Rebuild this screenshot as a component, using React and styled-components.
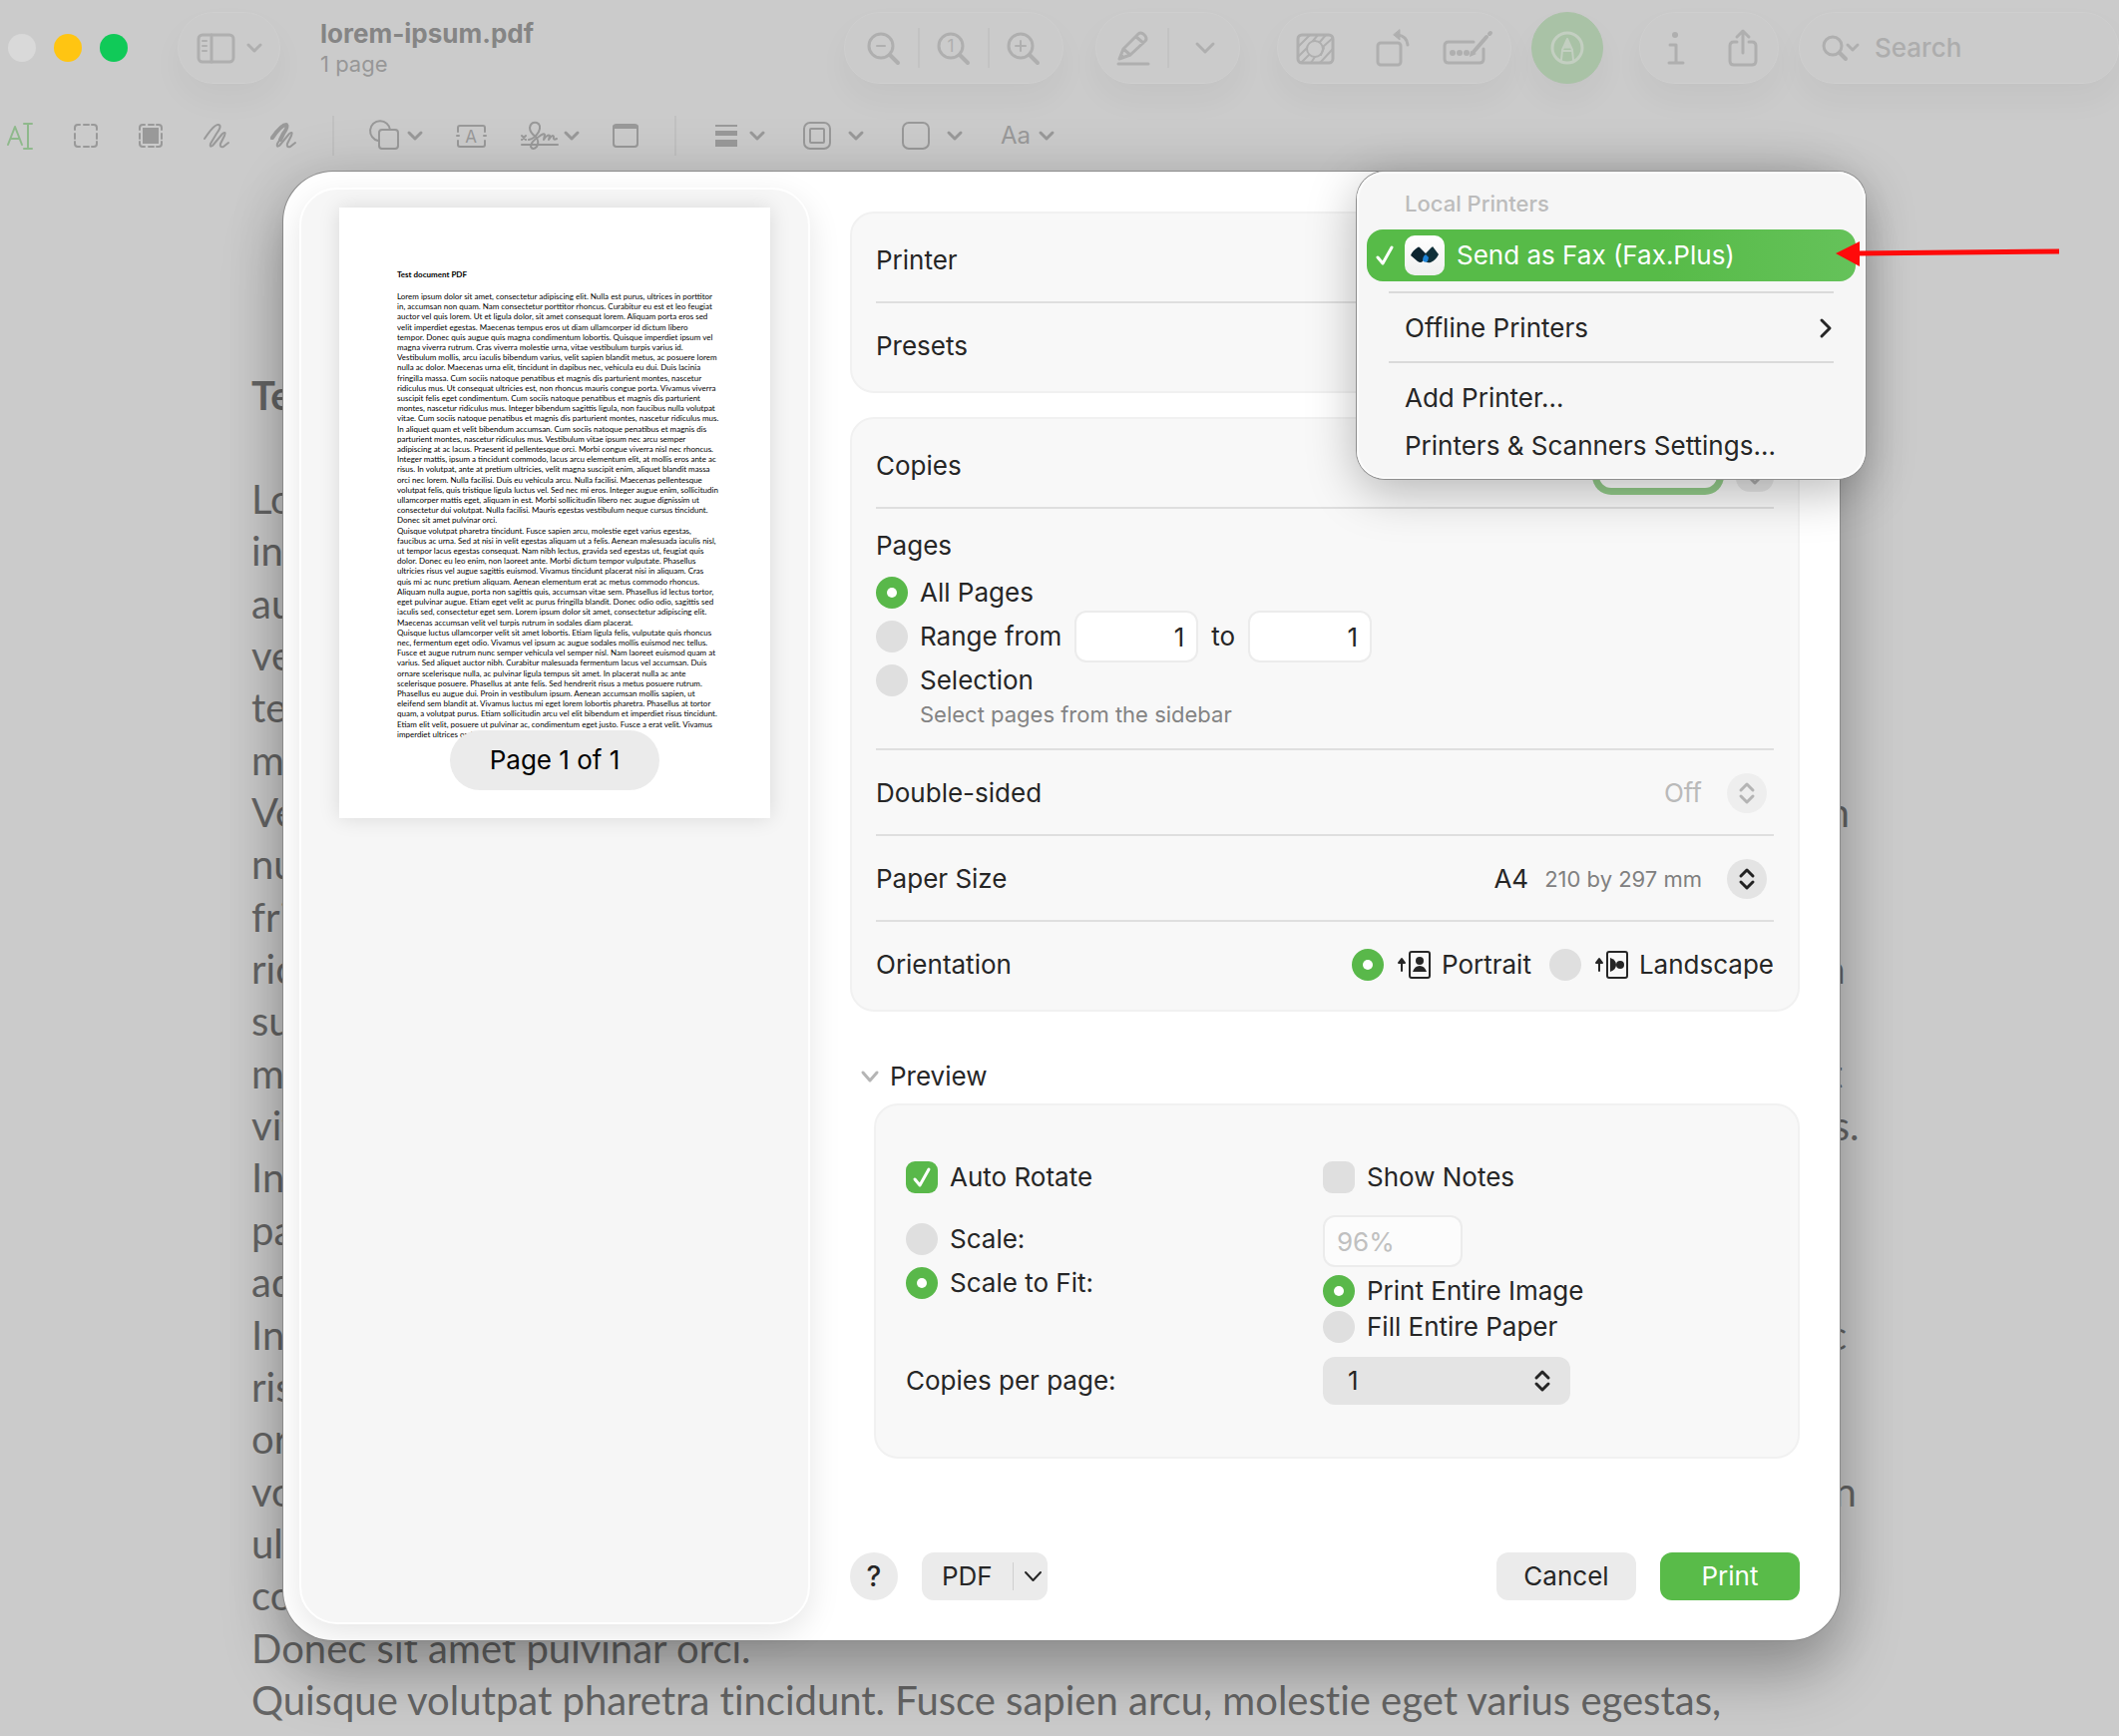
import React, { useState } from 'react';
import styled, { createGlobalStyle } from 'styled-components';

const GlobalStyle = createGlobalStyle`
  * {
    box-sizing: border-box;
  }

  body {
    margin: 0;
    background: #cbcbcb;
    color: #262626;
    font-family: Inter, 'Liberation Sans', sans-serif;
    font-size: 26px;
    line-height: 32px;
  }

  button,
  input,
  select {
    margin: 0;
    padding: 0;
    border: none;
    background: none;
    color: inherit;
    font: inherit;
  }
`;

const paragraphs = [
  [
    'Lorem ipsum dolor sit amet, consectetur adipiscing elit. Nulla est purus, ultrices in porttitor',
    'in, accumsan non quam. Nam consectetur porttitor rhoncus. Curabitur eu est et leo feugiat',
    'auctor vel quis lorem. Ut et ligula dolor, sit amet consequat lorem. Aliquam porta eros sed',
    'velit imperdiet egestas. Maecenas tempus eros ut diam ullamcorper id dictum libero',
    'tempor. Donec quis augue quis magna condimentum lobortis. Quisque imperdiet ipsum vel',
    'magna viverra rutrum. Cras viverra molestie urna, vitae vestibulum turpis varius id.',
    'Vestibulum mollis, arcu iaculis bibendum varius, velit sapien blandit metus, ac posuere lorem',
    'nulla ac dolor. Maecenas urna elit, tincidunt in dapibus nec, vehicula eu dui. Duis lacinia',
    'fringilla massa. Cum sociis natoque penatibus et magnis dis parturient montes, nascetur',
    'ridiculus mus. Ut consequat ultricies est, non rhoncus mauris congue porta. Vivamus viverra',
    'suscipit felis eget condimentum. Cum sociis natoque penatibus et magnis dis parturient',
    'montes, nascetur ridiculus mus. Integer bibendum sagittis ligula, non faucibus nulla volutpat',
    'vitae. Cum sociis natoque penatibus et magnis dis parturient montes, nascetur ridiculus mus.',
    'In aliquet quam et velit bibendum accumsan. Cum sociis natoque penatibus et magnis dis',
    'parturient montes, nascetur ridiculus mus. Vestibulum vitae ipsum nec arcu semper',
    'adipiscing at ac lacus. Praesent id pellentesque orci. Morbi congue viverra nisl nec rhoncus.',
    'Integer mattis, ipsum a tincidunt commodo, lacus arcu elementum elit, at mollis eros ante ac',
    'risus. In volutpat, ante at pretium ultricies, velit magna suscipit enim, aliquet blandit massa',
    'orci nec lorem. Nulla facilisi. Duis eu vehicula arcu. Nulla facilisi. Maecenas pellentesque',
    'volutpat felis, quis tristique ligula luctus vel. Sed nec mi eros. Integer augue enim, sollicitudin',
    'ullamcorper mattis eget, aliquam in est. Morbi sollicitudin libero nec augue dignissim ut',
    'consectetur dui volutpat. Nulla facilisi. Mauris egestas vestibulum neque cursus tincidunt.',
    'Donec sit amet pulvinar orci.',
  ],
  [
    'Quisque volutpat pharetra tincidunt. Fusce sapien arcu, molestie eget varius egestas,',
    'faucibus ac urna. Sed at nisi in velit egestas aliquam ut a felis. Aenean malesuada iaculis nisl,',
    'ut tempor lacus egestas consequat. Nam nibh lectus, gravida sed egestas ut, feugiat quis',
    'dolor. Donec eu leo enim, non laoreet ante. Morbi dictum tempor vulputate. Phasellus',
    'ultricies risus vel augue sagittis euismod. Vivamus tincidunt placerat nisi in aliquam. Cras',
    'quis mi ac nunc pretium aliquam. Aenean elementum erat ac metus commodo rhoncus.',
    'Aliquam nulla augue, porta non sagittis quis, accumsan vitae sem. Phasellus id lectus tortor,',
    'eget pulvinar augue. Etiam eget velit ac purus fringilla blandit. Donec odio odio, sagittis sed',
    'iaculis sed, consectetur eget sem. Lorem ipsum dolor sit amet, consectetur adipiscing elit.',
    'Maecenas accumsan velit vel turpis rutrum in sodales diam placerat.',
  ],
  [
    'Quisque luctus ullamcorper velit sit amet lobortis. Etiam ligula felis, vulputate quis rhoncus',
    'nec, fermentum eget odio. Vivamus vel ipsum ac augue sodales mollis euismod nec tellus.',
    'Fusce et augue rutrum nunc semper vehicula vel semper nisl. Nam laoreet euismod quam at',
    'varius. Sed aliquet auctor nibh. Curabitur malesuada fermentum lacus vel accumsan. Duis',
    'ornare scelerisque nulla, ac pulvinar ligula tempus sit amet. In placerat nulla ac ante',
    'scelerisque posuere. Phasellus at ante felis. Sed hendrerit risus a metus posuere rutrum.',
    'Phasellus eu augue dui. Proin in vestibulum ipsum. Aenean accumsan mollis sapien, ut',
    'eleifend sem blandit at. Vivamus luctus mi eget lorem lobortis pharetra. Phasellus at tortor',
    'quam, a volutpat purus. Etiam sollicitudin arcu vel elit bibendum et imperdiet risus tincidunt.',
    'Etiam elit velit, posuere ut pulvinar ac, condimentum eget justo. Fusce a erat velit. Vivamus',
    'imperdiet ultrices orci',
  ],
];

const allLines = paragraphs.flat();

/* ---------- icons ---------- */

const Icon = styled.svg`
  display: block;
  flex: none;
  fill: none;
  stroke: currentColor;
  stroke-width: ${(p) => p.$stroke || 3};
  stroke-linecap: round;
  stroke-linejoin: round;
  overflow: visible;
`;

const IconText = styled.text`
  fill: currentColor;
  stroke: none;
  font-family: Inter, sans-serif;
  text-anchor: middle;
`;

const Chevron = ({ width = 14, height = 8, stroke = 3 }) => (
  <Icon width={width} height={height} $stroke={stroke} aria-hidden="true">
    <path d={`M1 1L${width / 2} ${height - 1}L${width - 1} 1`} />
  </Icon>
);

const UpDown = () => (
  <Icon width="14" height="22" $stroke={3} aria-hidden="true">
    <path d="M1 8L7 2L13 8M1 14L7 20L13 14" />
  </Icon>
);

const SidebarIcon = () => (
  <Icon width="39" height="31">
    <rect x="2" y="2" width="35" height="27" rx="4" />
    <path d="M15 2V29" />
    <path d="M6 8H10M6 13H10M6 18H10" strokeWidth="2" />
  </Icon>
);

const Magnifier = ({ children }) => (
  <Icon width="32" height="33">
    <circle cx="13" cy="14" r="12" />
    <path d="M22 23L30 31" strokeWidth="4" />
    {children}
  </Icon>
);

const HighlightIcon = () => (
  <Icon width="34" height="35">
    <path d="M3 28L7 18L22 3Q24 1 27 3L29 5Q31 8 29 10L14 24ZM7 18L14 24M20 6L27 12" />
    <path d="M3 28L5 23L8 26Z" fill="currentColor" strokeWidth="1" />
    <path d="M2 33H32" />
  </Icon>
);

const AdjustIcon = () => (
  <Icon width="39" height="31">
    <rect x="2" y="2" width="35" height="28" rx="4" />
    <circle cx="19" cy="16" r="8" strokeWidth="2" />
    <path
      d="M2 14L14 2M2 24L11 15M6 29L13 22M22 2L17 8M30 2L24 9M37 5L27 14M37 16L24 30M15 30L19 24M28 15L25 22"
      strokeWidth="2"
    />
  </Icon>
);

const RotateIcon = () => (
  <Icon width="34" height="37" viewBox="-4 0 34 37">
    <rect x="2" y="13" width="23" height="22" rx="3" />
    <path d="M22 5Q31 6 32 15" />
    <path d="M24 0V10L18 5Z" fill="currentColor" strokeWidth="1" />
  </Icon>
);

const FormIcon = () => (
  <Icon width="50" height="33">
    <path d="M31 10H6Q2 10 2 14V27Q2 31 6 31H37Q41 31 41 27V17" />
    <path d="M31 20L44 5" strokeWidth="4" />
    <path d="M47 2L48 1" strokeWidth="4" />
    <g fill="currentColor" stroke="none">
      <circle cx="10" cy="21" r="3" />
      <circle cx="17" cy="21" r="3" />
      <circle cx="24" cy="21" r="3" />
      <path d="M27 25L28 19L34 22Z" />
    </g>
  </Icon>
);

const MarkupIcon = () => (
  <Icon width="34" height="34" color="#c3cfc1">
    <circle cx="17" cy="17" r="15" />
    <path d="M11 29L12 19L17 8L22 19L23 29M12 20H22" strokeWidth="2" />
    <path d="M17 8L20 17H14Z" fill="currentColor" strokeWidth="1" />
  </Icon>
);

const InfoIcon = () => (
  <Icon width="18" height="33">
    <circle cx="8" cy="3" r="3" fill="currentColor" stroke="none" />
    <path d="M3 13H9V31M2 31H16" />
  </Icon>
);

const ShareIcon = () => (
  <Icon width="30" height="38">
    <path d="M9 13H6Q2 13 2 17V32Q2 36 6 36H24Q28 36 28 32V17Q28 13 24 13H21" />
    <path d="M15 24V3M9 8L15 2L21 8" />
  </Icon>
);

const SearchIcon = () => (
  <Icon width="37" height="26">
    <circle cx="11" cy="11" r="9" />
    <path d="M18 18L24 24" strokeWidth="4" />
    <path d="M26 10L31 15L36 10" />
  </Icon>
);

const TextSelectIcon = () => (
  <Icon width="26" height="27" $stroke={2}>
    <path d="M1 22L8 4L15 22M4 16H12M21 1V26M17 1H25M17 26H25" />
  </Icon>
);

const SelectIcon = ({ filled }) => (
  <Icon width="24" height="24" $stroke={2}>
    <path d="M1 6V4Q1 1 4 1H6M10 1H15M18 1H20Q23 1 23 4V6M23 10V15M23 18V20Q23 23 20 23H18M15 23H10M6 23H4Q1 23 1 20V18M1 15V10" />
    {filled && <rect x="4" y="4" width="16" height="16" fill="currentColor" stroke="none" />}
  </Icon>
);

const SketchIcon = ({ thick }) => (
  <Icon width="26" height="26" $stroke={2}>
    <path d="M1 16Q11 1 15 2Q19 3 13 11L7 21Q6 25 9 23L19 11Q23 8 21 13L17 21Q16 25 20 24L25 20" />
    {thick && <path d="M2 15Q11 2 16 2Q18 4 13 11L10 17" strokeWidth="4" />}
  </Icon>
);

const ShapesIcon = () => (
  <Icon width="29" height="28" $stroke={2}>
    <path d="M8 19A10 10 0 1 1 20 8" />
    <rect x="9" y="8" width="19" height="19" rx="3" />
  </Icon>
);

const TextBoxIcon = () => (
  <Icon width="31" height="25" $stroke={2}>
    <path d="M2 8V4Q2 2 4 2H27Q29 2 29 4V8M2 17V21Q2 23 4 23H27Q29 23 29 21V17M1 12H3M28 12H30" />
    <IconText x="15" y="19" fontSize="17">A</IconText>
  </Icon>
);

const SignIcon = () => (
  <Icon width="38" height="28" $stroke={2}>
    <path d="M1 14L5 18M5 14L1 18M1 23H37" />
    <path d="M8 18Q14 17 18 10Q21 3 16 1Q10 0 9 6Q9 11 15 15Q19 20 16 25Q12 29 10 25Q10 20 18 15Q23 11 24 13L23 18Q27 12 29 14L28 18Q32 12 33 15Q32 19 36 17" />
  </Icon>
);

const NoteIcon = () => (
  <Icon width="26" height="24" $stroke={2}>
    <rect x="1" y="1" width="24" height="22" rx="3" />
    <path d="M2 3H24" strokeWidth="4" />
  </Icon>
);

const LinesIcon = () => (
  <Icon width="26" height="22">
    <g fill="currentColor" stroke="none">
      <rect x="3" y="0" width="22" height="2" />
      <rect x="3" y="6" width="22" height="5" />
      <rect x="3" y="15" width="22" height="7" />
    </g>
  </Icon>
);

const BorderIcon = () => (
  <Icon width="28" height="28" $stroke={2}>
    <rect x="1" y="1" width="26" height="26" rx="6" />
    <rect x="7" y="7" width="14" height="14" rx="1" />
  </Icon>
);

const FillIcon = () => (
  <Icon width="28" height="28" $stroke={2}>
    <rect x="1" y="1" width="26" height="26" rx="6" />
  </Icon>
);

const OrientationIcon = ({ landscape }) => (
  <Icon width="34" height="28" $stroke={2} aria-hidden="true">
    <path d="M6 20V11" />
    <path d="M3 12L6 8L9 12Z" fill="currentColor" strokeWidth="2" />
    <rect x="14" y="1" width="20" height="26" rx="2" />
    <g fill="currentColor" stroke="none">
      {landscape ? (
        <>
          <circle cx="27" cy="14" r="4" />
          <path d="M17 7Q23 9 23 14Q23 19 17 21Z" />
        </>
      ) : (
        <>
          <circle cx="24" cy="10" r="4" />
          <path d="M17 21Q19 15 24 15Q29 15 31 21Z" />
        </>
      )}
    </g>
  </Icon>
);

const FaxLogo = () => (
  <svg width="30" height="18" viewBox="0 0 30 18" aria-hidden="true">
    <path d="M8 1Q9 0 10 1L17 8L13 15Q11 17 8 15L1 9Q3 4 8 1Z" fill="#0c2430" />
    <path d="M23 0L29 8Q26 14 21 16Q18 17 16 15L15 9Z" fill="#10303a" />
    <path d="M15 8L22 1L24 2L19 11Z" fill="#10303a" />
    <path d="M16 8L19 11L18 15Q15 17 13 14Q13 10 16 8Z" fill="#1d84d8" />
  </svg>
);

const CheckIcon = () => (
  <Icon width="16" height="20" $stroke={3} aria-hidden="true">
    <path d="M1 12L6 18L15 2" />
  </Icon>
);

/* ---------- window behind the dialog ---------- */

const Window = styled.div`
  position: relative;
  min-height: 100vh;
  overflow: hidden;
`;

const TitleBar = styled.header`
  display: flex;
  align-items: center;
  height: 96px;
  padding-left: 8px;
  color: #afafaf;
`;

const Lights = styled.div`
  display: flex;
  gap: 18px;
`;

const Light = styled.button`
  width: 28px;
  height: 28px;
  border-radius: 50%;
  background: ${(p) => p.$color};
`;

const Pill = styled.div`
  display: flex;
  align-items: center;
  flex: none;
  gap: ${(p) => p.$gap || 18}px;
  height: 72px;
  margin-left: ${(p) => p.$before}px;
  padding: ${(p) => p.$pad};
  border: 1px solid #cfcfcf;
  border-radius: 36px;
  background: #cbcbcb;
  box-shadow: 0 16px 32px rgba(0, 0, 0, 0.04);
`;

const MarkupPill = styled(Pill)`
  border-color: #a9c2a6;
  background: #a9c2a6;
`;

const SearchPill = styled(Pill)`
  width: 321px;
`;

const Split = styled.span`
  width: 2px;
  height: 40px;
  background: #c3c3c3;
`;

const PlainButton = styled.button`
  display: flex;
  align-items: center;
  gap: ${(p) => p.$gap || 12}px;
`;

const MenuArrowButton = styled(PlainButton)`
  justify-content: center;
  width: 38px;
`;

const Titles = styled.div`
  flex: 1;
  margin-left: 40px;
`;

const FileName = styled.h1`
  margin: 0;
  color: #858585;
  font-size: 26px;
  line-height: 32px;
`;

const PageCount = styled.p`
  margin: 0;
  color: #979797;
  font-size: 22px;
  line-height: 28px;
`;

const SearchInput = styled.input`
  flex: 1;
  min-width: 0;
  font-weight: 500;

  &::placeholder {
    color: #adadad;
    opacity: 1;
  }
`;

const ToolBar = styled.div`
  display: flex;
  align-items: center;
  gap: 36px;
  height: 80px;
  padding-left: 7px;
  color: #999;
`;

const ToolGroup = styled.div`
  display: flex;
  align-items: center;
  gap: ${(p) => p.$gap}px;
`;

const ToolButton = styled(PlainButton)`
  color: ${(p) => (p.$active ? '#8fb98c' : 'inherit')};
`;

const ToolSplit = styled(Split)`
  background: #c1c1c1;
`;

const FontLabel = styled.span`
  font-size: 24px;
`;

const Document = styled.article`
  padding: 194px 0 0 252px;
  color: #656565;
  font-family: Lato, Carlito, sans-serif;
  font-size: 40px;
  font-variant-ligatures: none;
  line-height: 52px;
  white-space: nowrap;
`;

const DocumentTitle = styled.h2`
  margin: 0 0 52px;
  font-size: inherit;
`;

const DocumentLines = styled.div`
  display: flex;
  flex-direction: column;
  justify-content: space-between;
  height: 1256px;
`;

/* ---------- print dialog ---------- */

const Overlay = styled.div`
  position: absolute;
  inset: 0;
  display: flex;
  justify-content: center;
  align-items: flex-start;
  padding: 172px 0 0 4px;
`;

const Dialog = styled.section`
  position: relative;
  display: flex;
  width: 100%;
  max-width: 1560px;
  padding: 16px 40px 16px 16px;
  border-radius: 50px;
  background: #fff;
  box-shadow: 0 0 0 1px #8c8c8c, 0 36px 60px rgba(0, 0, 0, 0.26), 0 0 60px rgba(0, 0, 0, 0.12);
`;

const Sidebar = styled.aside`
  flex: none;
  width: 512px;
  padding: 18px 38px;
  border: 2px solid #fff;
  border-radius: 38px;
  background: #f6f6f6;
  box-shadow: 0 10px 32px rgba(0, 0, 0, 0.1);
`;

const Paper = styled.div`
  position: relative;
  height: 612px;
  padding: 62px 0 0 58px;
  background: #fff;
  box-shadow: 0 0 20px rgba(0, 0, 0, 0.12);
  color: #000;
  font-family: Lato, Carlito, sans-serif;
  font-size: 8px;
  line-height: 10px;
  white-space: nowrap;
`;

const PaperTitle = styled.h2`
  margin: 0 0 12px;
  color: #000;
  font-size: inherit;
`;

const PaperLines = styled.div`
  display: flex;
  flex-direction: column;
  justify-content: space-between;
  height: 449px;
`;

const PageBadge = styled.div`
  position: absolute;
  bottom: 28px;
  left: 50%;
  width: 210px;
  transform: translateX(-50%);
  border-radius: 30px;
  background: #ebebeb;
  color: #000;
  font-family: Inter, sans-serif;
  font-size: 26px;
  line-height: 60px;
  text-align: center;
`;

const Settings = styled.form`
  flex: 1;
  min-width: 0;
  margin-left: 40px;
  padding: 24px 0;
`;

const Group = styled.div`
  margin-bottom: 24px;
  padding: 4px 24px;
  border: 2px solid #f1f1f1;
  border-radius: 24px;
  background: #f8f8f8;
`;

const Row = styled.div`
  display: flex;
  align-items: center;
  justify-content: space-between;
  height: 86px;
  padding-top: 2px;
  border-bottom: 2px solid #dfdfdf;

  &:last-child {
    height: 84px;
    border-bottom: none;
  }
`;

const Pages = styled.fieldset`
  margin: 0;
  padding: 21px 0 18px;
  border: none;
  border-bottom: 2px solid #dfdfdf;
`;

const PagesLegend = styled.legend`
  float: left;
  width: 100%;
  padding: 0;
  margin-bottom: 15px;
`;

const Options = styled.div`
  display: flex;
  flex-direction: column;
  gap: ${(p) => p.$gap || 12}px;
  clear: both;
`;

const Option = styled.label`
  display: flex;
  align-items: center;
  gap: 12px;
  height: 32px;
`;

const RangeRow = styled.div`
  display: flex;
  align-items: center;
  gap: 13px;
  height: 32px;
`;

const Radio = styled.input.attrs({ type: 'radio' })`
  appearance: none;
  display: grid;
  place-items: center;
  flex: none;
  width: 32px;
  height: 32px;
  border-radius: 50%;
  background: #dfdfdf;

  &:checked {
    background: #59b84a;
  }

  &:checked::after {
    content: '';
    width: 10px;
    height: 10px;
    border-radius: 50%;
    background: #fff;
  }
`;

const CheckWrap = styled.span`
  display: grid;
  place-items: center;
  color: #fff;

  > * {
    grid-area: 1 / 1;
  }
`;

const CheckInput = styled.input.attrs({ type: 'checkbox' })`
  appearance: none;
  width: 32px;
  height: 32px;
  border-radius: 9px;
  background: #dfdfdf;

  &:checked {
    background: #59b84a;
  }
`;

const Checkbox = ({ label, ...rest }) => (
  <Option>
    <CheckWrap>
      <CheckInput {...rest} />
      {rest.defaultChecked && <CheckIcon />}
    </CheckWrap>
    {label}
  </Option>
);

const Field = styled.input.attrs({ type: 'text' })`
  width: ${(p) => p.$width || 124}px;
  height: 52px;
  padding: 0 12px;
  border: 2px solid #ececec;
  border-radius: 12px;
  background: #fff;
  text-align: ${(p) => p.$align || 'right'};

  &:disabled {
    background: #fcfcfc;
    color: #c0c0c0;
  }
`;

const Hint = styled.p`
  margin: 2px 0 0 44px;
  color: #838383;
  font-size: 22px;
`;

const CopiesField = styled(Field)`
  width: 118px;
  height: 44px;
  margin-right: 19px;
  border: none;
  box-shadow: 0 0 0 7px #93cb8a;
`;

const Stepper = styled.button`
  display: flex;
  align-items: flex-end;
  justify-content: center;
  width: 38px;
  height: 52px;
  padding-bottom: 8px;
  border-radius: 14px;
  background: #e6e6e6;
  color: #aaa;
`;

const Cluster = styled.div`
  display: flex;
  align-items: center;
`;

const BareSelect = styled.select`
  appearance: none;
  width: 60px;
  height: 40px;
  opacity: 1;
  text-align: right;
  text-align-last: right;

  &:disabled {
    color: #bababa;
  }
`;

const Detail = styled.span`
  margin-left: 16px;
  color: #808080;
  font-size: 22px;
`;

const RoundArrows = styled.span`
  display: grid;
  place-items: center;
  width: 40px;
  height: 40px;
  margin: 0 7px 0 25px;
  border-radius: 50%;
  background: ${(p) => (p.$muted ? '#eee' : '#e4e4e4')};
  color: ${(p) => (p.$muted ? '#b4b4b4' : '#222')};
`;

const OrientationOption = styled(Option)`
  margin-left: 18px;
`;

const Disclosure = styled.button`
  display: flex;
  align-items: center;
  gap: 12px;
  height: 40px;
  margin: 44px 0 8px 12px;
  padding-top: 2px;

  svg {
    color: #b5b5b5;
  }
`;

const PreviewGroup = styled(Group)`
  display: grid;
  grid-template-columns: 418px 1fr;
  row-gap: 14px;
  margin: 0 0 94px 24px;
  padding: 56px 30px 52px;
`;

const ScaleModes = styled(Options)`
  padding-top: 16px;
`;

const ScaleValues = styled(Options)`
  padding-top: 8px;
`;

const CopiesLabel = styled.label`
  align-self: center;
`;

const SelectBox = styled.div`
  display: grid;
  align-items: center;
  width: 248px;
  height: 48px;
  border-radius: 12px;
  background: #e4e4e4;

  > * {
    grid-area: 1 / 1;
  }

  > svg {
    justify-self: end;
    margin-right: 21px;
    pointer-events: none;
  }
`;

const BoxedSelect = styled.select`
  appearance: none;
  height: 48px;
  padding-left: 25px;
`;

const Footer = styled.footer`
  display: flex;
  align-items: center;
  gap: 24px;
`;

const FooterButton = styled.button`
  width: 140px;
  height: 48px;
  border-radius: 12px;
  background: ${(p) => (p.$primary ? '#59bb49' : '#ebebeb')};
  color: ${(p) => (p.$primary ? '#fff' : '#262626')};
`;

const HelpButton = styled(FooterButton)`
  width: 48px;
  border-radius: 50%;
  font-size: 28px;
  font-weight: 500;
`;

const PdfButton = styled(FooterButton)`
  display: flex;
  align-items: center;
  gap: 11px;
  width: 126px;
  margin-right: auto;
  padding-left: 20px;
`;

const PdfSplit = styled.span`
  width: 1px;
  height: 28px;
  margin-left: 9px;
  background: #cfcfcf;
`;

/* ---------- printer menu ---------- */

const Menu = styled.div`
  position: absolute;
  top: 0;
  right: -26px;
  width: 510px;
  padding: 8px 10px 10px;
  border-radius: 28px;
  background: #f6f6f6;
  box-shadow: inset 0 0 0 2px #fcfcfc, 0 0 0 1px #8f8f8f, 0 12px 50px rgba(0, 0, 0, 0.28);
`;

const MenuLabel = styled.div`
  margin-bottom: 2px;
  padding-left: 38px;
  color: #bcbcbc;
  font-size: 22px;
  font-weight: 500;
  line-height: 48px;
`;

const MenuItem = styled.button`
  display: flex;
  align-items: center;
  width: 100%;
  height: 48px;
  padding: 2px 24px 0 38px;
  text-align: left;
`;

const MenuItemText = styled.span`
  flex: 1;
`;

const ActiveItem = styled(MenuItem)`
  height: 52px;
  padding: 0 24px 0 10px;
  border-radius: 16px;
  background: linear-gradient(90deg, #57bb48 60%, #65c25a);
  color: #fff;
`;

const LogoTile = styled.span`
  display: grid;
  place-items: center;
  width: 40px;
  height: 40px;
  margin: 0 12px;
  border-radius: 10px;
  background: linear-gradient(#fff, #f0f0f0);
`;

const MenuLine = styled.hr`
  height: 2px;
  margin: 10px 22px;
  border: none;
  background: #dadada;
`;

const Arrow = styled.svg`
  position: absolute;
  top: 68px;
  left: 1556px;
`;

const PrinterMenu = () => (
  <Menu>
    <MenuLabel>Local Printers</MenuLabel>
    <ActiveItem type="button">
      <CheckIcon />
      <LogoTile>
        <FaxLogo />
      </LogoTile>
      <MenuItemText>Send as Fax (Fax.Plus)</MenuItemText>
    </ActiveItem>
    <MenuLine />
    <MenuItem type="button">
      <MenuItemText>Offline Printers</MenuItemText>
      <Icon width="12" height="18">
        <path d="M2 1L10 9L2 17" />
      </Icon>
    </MenuItem>
    <MenuLine />
    <MenuItem type="button">Add Printer…</MenuItem>
    <MenuItem type="button">Printers &amp; Scanners Settings…</MenuItem>
  </Menu>
);

const WindowToolbars = () => (
  <>
    <TitleBar>
      <Lights>
        <Light aria-label="Close" $color="#d9d9d9" />
        <Light aria-label="Minimize" $color="#ffc512" />
        <Light aria-label="Zoom" $color="#10ca58" />
      </Lights>
      <Pill $before={50} $pad="0 18px">
        <PlainButton aria-label="Sidebar">
          <SidebarIcon />
          <Chevron />
        </PlainButton>
      </Pill>
      <Titles>
        <FileName>lorem-ipsum.pdf</FileName>
        <PageCount>1 page</PageCount>
      </Titles>
      <Pill $before={0} $pad="0 23px">
        <PlainButton aria-label="Zoom Out">
          <Magnifier>
            <path d="M9 14H17" strokeWidth="2" />
          </Magnifier>
        </PlainButton>
        <Split />
        <PlainButton aria-label="Actual Size">
          <Magnifier>
            <IconText x="13" y="20" fontSize="17">1</IconText>
          </Magnifier>
        </PlainButton>
        <Split />
        <PlainButton aria-label="Zoom In">
          <Magnifier>
            <path d="M8 14H18M13 9V19" strokeWidth="2" />
          </Magnifier>
        </PlainButton>
      </Pill>
      <Pill $before={32} $gap={17} $pad="0 15px 0 20px">
        <PlainButton aria-label="Highlight">
          <HighlightIcon />
        </PlainButton>
        <Split />
        <MenuArrowButton aria-label="Highlight colors">
          <Chevron width={18} height={10} />
        </MenuArrowButton>
      </Pill>
      <Pill $before={37} $gap={37} $pad="0 18px">
        <PlainButton aria-label="Adjust">
          <AdjustIcon />
        </PlainButton>
        <PlainButton aria-label="Rotate">
          <RotateIcon />
        </PlainButton>
        <PlainButton aria-label="Fill form">
          <FormIcon />
        </PlainButton>
      </Pill>
      <MarkupPill as="button" aria-label="Markup" $before={20} $pad="0 18px">
        <MarkupIcon />
      </MarkupPill>
      <Pill $before={36} $gap={43} $pad="0 20px 0 27px">
        <PlainButton aria-label="Info">
          <InfoIcon />
        </PlainButton>
        <PlainButton aria-label="Share">
          <ShareIcon />
        </PlainButton>
      </Pill>
      <SearchPill as="label" $before={20} $gap={16} $pad="0 20px 0 22px">
        <SearchIcon />
        <SearchInput type="search" placeholder="Search" aria-label="Search" />
      </SearchPill>
    </TitleBar>
    <ToolBar>
      <ToolGroup $gap={41}>
        <ToolButton $active aria-label="Text Selection">
          <TextSelectIcon />
        </ToolButton>
        <ToolButton aria-label="Rectangular Selection">
          <SelectIcon />
        </ToolButton>
        <ToolButton aria-label="Redact">
          <SelectIcon filled />
        </ToolButton>
        <ToolButton aria-label="Sketch">
          <SketchIcon />
        </ToolButton>
        <ToolButton aria-label="Draw">
          <SketchIcon thick />
        </ToolButton>
      </ToolGroup>
      <ToolSplit />
      <ToolGroup $gap={34}>
        <ToolButton aria-label="Shapes" $gap={9}>
          <ShapesIcon />
          <Chevron />
        </ToolButton>
        <ToolButton aria-label="Text">
          <TextBoxIcon />
        </ToolButton>
        <ToolButton aria-label="Sign" $gap={6}>
          <SignIcon />
          <Chevron />
        </ToolButton>
        <ToolButton aria-label="Note">
          <NoteIcon />
        </ToolButton>
      </ToolGroup>
      <ToolSplit />
      <ToolGroup $gap={39}>
        <ToolButton aria-label="Shape Style">
          <LinesIcon />
          <Chevron />
        </ToolButton>
        <ToolButton aria-label="Border Color" $gap={18}>
          <BorderIcon />
          <Chevron />
        </ToolButton>
        <ToolButton aria-label="Fill Color" $gap={18}>
          <FillIcon />
          <Chevron />
        </ToolButton>
        <ToolButton aria-label="Text Style" $gap={9}>
          <FontLabel>Aa</FontLabel>
          <Chevron />
        </ToolButton>
      </ToolGroup>
    </ToolBar>
  </>
);

const PageThumbnail = () => (
  <Sidebar>
    <Paper>
      <PaperTitle>Test document PDF</PaperTitle>
      <PaperLines>
        {allLines.map((line) => (
          <span key={line}>{line}</span>
        ))}
      </PaperLines>
      <PageBadge>Page 1 of 1</PageBadge>
    </Paper>
  </Sidebar>
);

const PrintSettings = () => {
  const [from, setFrom] = useState('1');
  const [to, setTo] = useState('1');

  return (
    <Settings onSubmit={(e) => e.preventDefault()}>
      <Group>
        <Row>Printer</Row>
        <Row>Presets</Row>
      </Group>

      <Group>
        <Row>
          <label htmlFor="copies">Copies</label>
          <Cluster>
            <CopiesField id="copies" defaultValue="1" />
            <Stepper type="button" aria-label="Change copies">
              <Chevron />
            </Stepper>
          </Cluster>
        </Row>
        <Pages>
          <PagesLegend>Pages</PagesLegend>
          <Options>
            <Option>
              <Radio name="pages" defaultChecked />
              All Pages
            </Option>
            <RangeRow>
              <Option>
                <Radio name="pages" />
                Range from
              </Option>
              <Field aria-label="From page" value={from} onChange={(e) => setFrom(e.target.value)} />
              <span>to</span>
              <Field aria-label="To page" value={to} onChange={(e) => setTo(e.target.value)} />
            </RangeRow>
            <Option>
              <Radio name="pages" />
              Selection
            </Option>
          </Options>
          <Hint>Select pages from the sidebar</Hint>
        </Pages>
        <Row>
          <label htmlFor="duplex">Double-sided</label>
          <Cluster>
            <BareSelect id="duplex" disabled>
              <option>Off</option>
            </BareSelect>
            <RoundArrows $muted>
              <UpDown />
            </RoundArrows>
          </Cluster>
        </Row>
        <Row>
          <label htmlFor="paper">Paper Size</label>
          <Cluster>
            <BareSelect id="paper">
              <option>A4</option>
            </BareSelect>
            <Detail>210 by 297 mm</Detail>
            <RoundArrows>
              <UpDown />
            </RoundArrows>
          </Cluster>
        </Row>
        <Row>
          <span>Orientation</span>
          <Cluster>
            <OrientationOption>
              <Radio name="orientation" defaultChecked />
              <OrientationIcon />
              Portrait
            </OrientationOption>
            <OrientationOption>
              <Radio name="orientation" />
              <OrientationIcon landscape />
              Landscape
            </OrientationOption>
          </Cluster>
        </Row>
      </Group>

      <Disclosure type="button">
        <Chevron width={16} height={10} />
        Preview
      </Disclosure>
      <PreviewGroup>
        <Checkbox label="Auto Rotate" defaultChecked />
        <Checkbox label="Show Notes" />
        <ScaleModes>
          <Option>
            <Radio name="scale" />
            Scale:
          </Option>
          <Option>
            <Radio name="scale" defaultChecked />
            Scale to Fit:
          </Option>
        </ScaleModes>
        <ScaleValues $gap={8}>
          <Field $width={140} $align="left" aria-label="Scale percent" defaultValue="96%" disabled />
          <Options $gap={4}>
            <Option>
              <Radio name="fit" defaultChecked />
              Print Entire Image
            </Option>
            <Option>
              <Radio name="fit" />
              Fill Entire Paper
            </Option>
          </Options>
        </ScaleValues>
        <CopiesLabel htmlFor="perPage">Copies per page:</CopiesLabel>
        <SelectBox>
          <BoxedSelect id="perPage">
            <option>1</option>
          </BoxedSelect>
          <UpDown />
        </SelectBox>
      </PreviewGroup>

      <Footer>
        <HelpButton type="button">?</HelpButton>
        <PdfButton type="button">
          PDF
          <PdfSplit />
          <Chevron width={17} height={10} stroke={2} />
        </PdfButton>
        <FooterButton type="button">Cancel</FooterButton>
        <FooterButton type="submit" $primary>
          Print
        </FooterButton>
      </Footer>
    </Settings>
  );
};

const App = () => (
  <>
    <GlobalStyle />
    <Window>
      <WindowToolbars />
      <Document>
        <DocumentTitle>Test document PDF</DocumentTitle>
        <DocumentLines>
          {allLines.slice(0, 24).map((line) => (
            <span key={line}>{line}</span>
          ))}
        </DocumentLines>
      </Document>
      <Overlay>
        <Dialog role="dialog" aria-label="Print">
          <PageThumbnail />
          <PrintSettings />
          <PrinterMenu />
          <Arrow width="226" height="28" viewBox="0 0 226 28" aria-hidden="true">
            <path d="M20 14L224 12" stroke="#ff0a0a" strokeWidth="5" />
            <path d="M0 14L24 2V27Z" fill="#ff0a0a" />
          </Arrow>
        </Dialog>
      </Overlay>
    </Window>
  </>
);

export default App;
